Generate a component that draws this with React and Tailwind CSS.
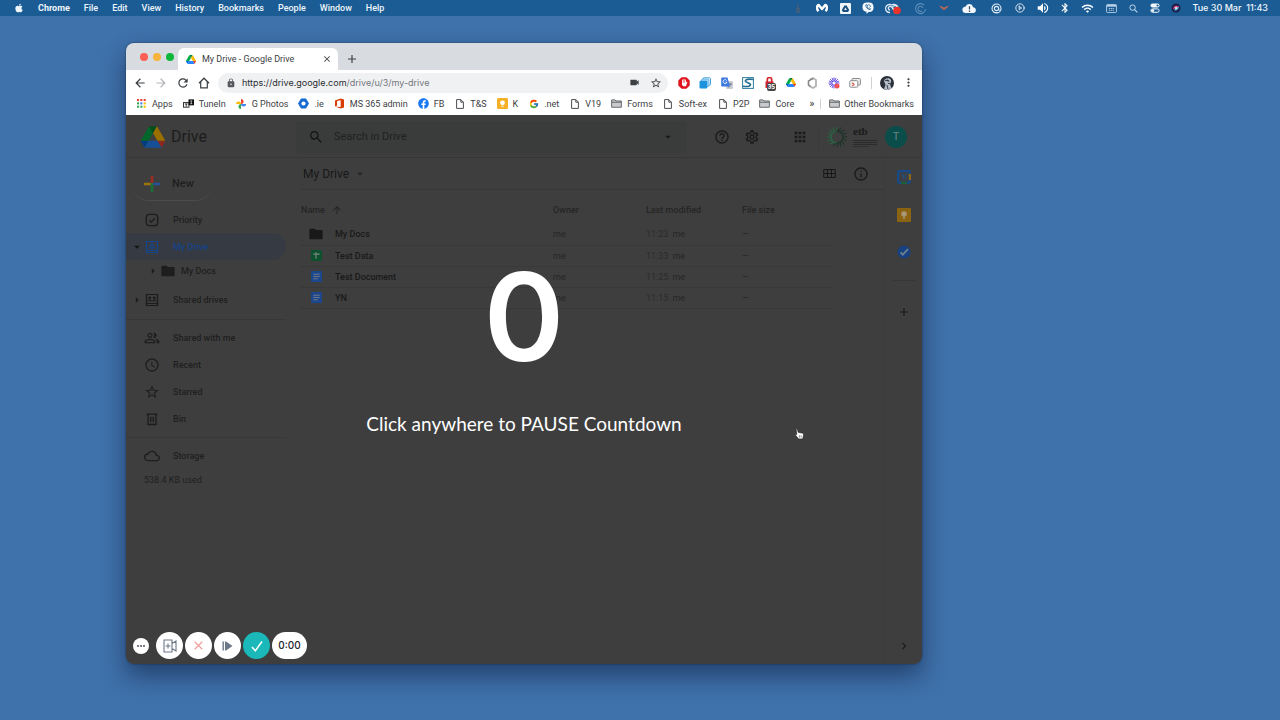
import React from "react";
import {
  MdArrowBack, MdArrowForward, MdRefresh, MdLock, MdVideocam, MdStarBorder, MdMoreVert, MdSearch,
  MdArrowDropDown, MdArrowRight, MdHelpOutline, MdOutlineSettings, MdApps, MdFolder, MdOutlinePeopleAlt,
  MdAccessTime, MdCloudQueue, MdInfoOutline, MdArrowUpward, MdAdd, MdChevronRight, MdClose,
  MdBluetooth, MdWifi, MdVolumeUp,
} from "react-icons/md";
import { FaApple, FaFacebook } from "react-icons/fa";
import { FcGoogle } from "react-icons/fc";
import { LuCirclePlay } from "react-icons/lu";

function DriveLogo({ className }) {
  return (
    <svg viewBox="0 0 87.3 78" className={className} aria-hidden="true">
      <path d="m6.6 66.85 3.85 6.65c.8 1.4 1.95 2.5 3.3 3.3l13.75-23.8h-27.5c0 1.55.4 3.1 1.2 4.5z" fill="#0066da" />
      <path d="m43.65 25-13.75-23.8c-1.35.8-2.5 1.9-3.3 3.3l-25.4 44a9.06 9.06 0 0 0 -1.2 4.5h27.5z" fill="#00ac47" />
      <path d="m73.55 76.8c1.35-.8 2.5-1.9 3.3-3.3l1.6-2.75 7.65-13.25c.8-1.4 1.2-2.95 1.2-4.5h-27.502l5.852 11.5z" fill="#ea4335" />
      <path d="m43.65 25 13.75-23.8c-1.35-.8-2.9-1.2-4.5-1.2h-18.5c-1.6 0-3.15.45-4.5 1.2z" fill="#00832d" />
      <path d="m59.8 53h-32.3l-13.75 23.8c1.35.8 2.9 1.2 4.5 1.2h50.8c1.6 0 3.15-.45 4.5-1.2z" fill="#2684fc" />
      <path d="m73.4 26.5-12.7-22c-.8-1.4-1.95-2.5-3.3-3.3l-13.75 23.8 16.15 28h27.45c0-1.55-.4-3.1-1.2-4.5z" fill="#ffba00" />
    </svg>
  );
}

const statusItems = [
  ["Microphone", "w-3", <svg viewBox="0 0 12 12" className="h-3 w-3"><path d="M6 2v5M4 6.500l2 2 2-2M4 10h4" stroke="#4a5f78" strokeWidth="1.300" fill="none" /></svg>],
  ["Malwarebytes", "w-3.5", <svg viewBox="0 0 14 12" className="h-3 w-3.5"><path d="M3.400 9.300C1.200 6.800 2 3.200 3.800 3L7 7l3.200-4c1.800.2 2.600 3.800.4 6.300" stroke="#fff" strokeWidth="2.400" fill="none" strokeLinejoin="round" /></svg>],
  ["Google Drive", "w-[11px]", <svg viewBox="0 0 11 11" className="h-[11px] w-[11px]"><rect width="11" height="11" rx="1" fill="#eef4fa" /><path d="M4.400 2.500h2.200l2.600 4.400-1.200 2H3L1.800 6.900z" fill="#1d4f7c" /><path d="M5.500 4.600 6.800 7H4.200z" fill="#eef4fa" /></svg>],
  ["Viber", "w-3", <svg viewBox="0 0 12 12" className="h-3 w-3"><path d="M6 .5c4 0 5.500 1.200 5.500 4.700S10 10 6.500 10L4.500 12V9.700C1.600 9.200.5 8 .5 5.200.5 1.700 2 .5 6 .5z" fill="#f5f9fc" /><path d="M3.800 3c0 2.500 1.700 4.300 4.200 4.700l.6-1-1.300-.8-.7.5C5.800 6 5.400 5.500 5.200 4.800l.6-.6L5 2.700zM6.300 2.600c1.400.1 2.200 1 2.200 2.300" fill="none" stroke="#1d5c93" strokeWidth=".8" /></svg>],
  ["Creative Cloud", "w-[17px]", <svg viewBox="0 0 17 13" className="h-[13px] w-[17px]"><path d="M5 10.500a4 4 0 1 1 1.500-7.500A4.500 4.500 0 0 1 13 5M5 8a1.800 1.800 0 1 1 1.500-3l3 3M9 8a2.300 2.300 0 1 1 3-3" stroke="#dce8f4" strokeWidth="1.300" fill="none" /><circle cx="12" cy="8.500" r="3.800" fill="#e8352b" /></svg>],
  ["Sync", "w-[15px]", <svg viewBox="0 0 15 13" className="h-[13px] w-[15px]"><path d="M11 3A5 5 0 1 0 12.500 7M10 6a2.600 2.600 0 1 0-1 3" stroke="#5c8cb8" strokeWidth="1.100" fill="none" /></svg>],
  ["Fox", "w-2.5", <svg viewBox="0 0 12 8" className="h-2 w-3"><path d="M.500 1 5 3l1 .600L7 3l4.500-2C10.500 4 8 5 7 5.500L6 7 5 5.500C4 5 1.500 4 .500 1z" fill="#c1694f" /></svg>],
  ["Cloud alert", "w-[18px]", <svg viewBox="0 0 16 12" className="h-[11px] w-[15px]"><path d="M4 11a3.500 3.500 0 0 1-.500-7A4.500 4.500 0 0 1 12 4.500 3.300 3.300 0 0 1 12.500 11z" fill="#f3f7fb" /><path d="M8 3.500v3.600M8 8.200v1.500" stroke="#3d4f63" strokeWidth="1.400" /></svg>],
  ["Assistant", "w-[15px]", <svg viewBox="0 0 12 12" className="h-[11px] w-[11px]"><circle cx="6" cy="6" r="4.900" stroke="#e4eef7" fill="none" strokeWidth="1.200" /><circle cx="6" cy="6" r="2.300" stroke="#e4eef7" fill="none" strokeWidth="1.200" /><path d="M8.300 5.500c.2 3 1.500 3.500 2.500 2M3 10.500h6" stroke="#e4eef7" fill="none" /></svg>],
  ["Play", "w-2.5", <LuCirclePlay className="h-2.5 w-2.5 text-white" />],
  ["Volume", "w-3.5", <MdVolumeUp className="h-3.5 w-3.5 text-white" />],
  ["Bluetooth", "w-2", <MdBluetooth className="h-3 w-3 shrink-0 text-white" />],
  ["Wi-Fi", "w-3.5", <MdWifi className="h-[13px] w-[13px] text-white" />],
  ["Calendar", "w-3", <svg viewBox="0 0 12 10" className="h-[9px] w-[11px]"><rect x=".5" y=".5" width="11" height="9" rx="1" fill="none" stroke="#b9d2e8" /><path d="M1 2h10" stroke="#b9d2e8" strokeWidth="2" /><path d="M3 5h6M3 7h6" stroke="#b9d2e8" strokeDasharray="1.500 .6" /></svg>],
  ["Spotlight", "w-[11px]", <svg viewBox="0 0 10 10" className="h-[9px] w-[9px]"><circle cx="4" cy="4" r="3" fill="none" stroke="#c3d9ec" strokeWidth="1.100" /><path d="m6.200 6.200 3 3" stroke="#c3d9ec" strokeWidth="1.200" /></svg>],
  ["Control Centre", "w-2.5", <svg viewBox="0 0 10 10" className="h-2.5 w-2.5"><rect x=".5" y=".5" width="9" height="4" rx="2" fill="#f4f8fc" /><circle cx="7.500" cy="2.500" r="1.100" fill="#1d5c93" /><rect x=".9" y="5.900" width="8.200" height="3.400" rx="1.700" fill="none" stroke="#f4f8fc" /><circle cx="2.800" cy="7.600" r="1.400" fill="#f4f8fc" /></svg>],
  ["Siri", "w-2.5", <svg viewBox="0 0 10 10" className="h-2.5 w-2.5"><circle cx="5" cy="5" r="4.500" fill="#20204a" /><path d="M2 6C3 2 6 2 8 4 6 5 4 5 2 6z" fill="#f04c8c" /><path d="M3 7c2 1 4 0 5-3-2 0-4 2-5 3z" fill="#55c8ee" /><circle cx="5" cy="5" r="1" fill="#fff" /></svg>],
];

function MenuBar() {
  return (
    <header className="flex h-4 shrink-0 items-center bg-[#1b5c95] pl-3.5 pr-3 text-[9px] leading-4 font-medium text-[#eef5fb]">
      <nav aria-label="Application menu" className="flex items-center gap-3.5 font-[Roboto,sans-serif]">
        <button aria-label="Apple menu"><FaApple className="h-2.5 w-2.5" /></button>
        <button className="font-bold">Chrome</button>
        {["File", "Edit", "View", "History", "Bookmarks", "People", "Window", "Help"].map((t) => <button key={t}>{t}</button>)}
      </nav>
      <div className="ml-auto flex items-center gap-[11px]">
        {statusItems.map(([name, w, icon]) => (
          <button key={name} aria-label={name} className={"flex h-4 shrink-0 items-center justify-center " + w}>{icon}</button>
        ))}
        <button className="whitespace-pre">{"Tue 30 Mar  11:43"}</button>
      </div>
    </header>
  );
}

function PageIcon() {
  return <svg viewBox="0 0 8 10" className="h-2.5 w-2"><path d="M.6.6h4.200l2.600 2.600v6.200H.6zM4.800.6v2.600h2.600" fill="none" stroke="#4a4d51" strokeWidth="1" /></svg>;
}
function FolderIcon() {
  return <svg viewBox="0 0 12 10" className="h-[9px] w-[11px]"><path d="M.6 9.200V1h3.800l1 1.200h6v7z" fill="#c9cbcd" stroke="#5b5e62" /><path d="M.6 3.600h10.800" stroke="#5b5e62" /></svg>;
}

const dots = ["#ea4335", "#ea4335", "#ea4335", "#34a853", "#4285f4", "#fbbc04", "#34a853", "#34a853", "#fbbc04"];
const bookmarks = [
  ["Apps", <svg viewBox="0 0 10 10" className="h-[9px] w-[9px]">{dots.map((c, i) => <rect key={i} x={(i % 3) * 3.7} y={Math.floor(i / 3) * 3.7} width="2.300" height="2.300" fill={c} />)}</svg>],
  ["TuneIn", <svg viewBox="0 0 12 9" className="h-[9px] w-[11px]"><rect x=".5" y="3.500" width="6" height="5" fill="#fff" stroke="#222" /><path d="M2 5h3M3.500 5v3" stroke="#222" /><rect x="6" y="0" width="6" height="6.500" fill="#111" /><path d="M8 1.700h2M9 1.700v3M8 4.700h2" stroke="#fff" strokeWidth=".7" /></svg>],
  ["G Photos", <svg viewBox="0 0 12 12" className="h-2.5 w-2.5"><path d="M6 6V0a3 3 0 0 1 0 6z" fill="#ea4335" /><path d="M6 6h6a3 3 0 0 1-6 0z" fill="#4285f4" /><path d="M6 6v6a3 3 0 0 1 0-6z" fill="#34a853" /><path d="M6 6H0a3 3 0 0 1 6 0z" fill="#fbbc04" /></svg>],
  [".ie", <svg viewBox="0 0 12 12" className="h-[11px] w-[11px]"><path d="M3.500 1h5L11.500 6l-3 5h-5L.5 6z" fill="#1769d2" stroke="#1769d2" strokeLinejoin="round" /><circle cx="6" cy="6" r="2.300" fill="#fff" /></svg>],
  ["MS 365 admin", <svg viewBox="0 0 10 12" className="h-[11px] w-[9px]"><path d="M0 2.800 6.300.4 10 1.500v9L6.300 11.600 0 9.300l6.300.7V2.300L2.300 3.300v5L0 9.300z" fill="#d83b01" /></svg>],
  ["FB", <FaFacebook className="h-[11px] w-[11px] text-[#1877f2]" />],
  ["T&S", <PageIcon />],
  ["K", <svg viewBox="0 0 12 12" className="h-[11px] w-[11px]"><rect width="12" height="12" rx="1.500" fill="#f6b026" /><circle cx="6" cy="5.200" r="2.600" fill="#fff" /><path d="M4.800 9h2.400" stroke="#fff" strokeWidth="1.300" /></svg>],
  [".net", <FcGoogle className="h-2.5 w-2.5" />],
  ["V19", <PageIcon />],
  ["Forms", <FolderIcon />],
  ["Soft-ex", <PageIcon />],
  ["P2P", <PageIcon />],
  ["Core", <FolderIcon />],
];

const extensions = [
  ["AdBlock", <svg viewBox="0 0 12 12" className="h-3 w-3"><path d="M3.600.3h4.800l3.300 3.300v4.800l-3.300 3.300H3.600L.3 8.400V3.600z" fill="#e0121c" /><path d="M4.600 7V3M6 7V2.300M7.400 7V3" stroke="#fff" strokeWidth="1" strokeLinecap="round" /><path d="M4.100 5.800h3.800l.9-1.200.6.500L8 9.300H5.200L4.100 8z" fill="#fff" /></svg>],
  ["Tab copy", <svg viewBox="0 0 12 12" className="h-3 w-3"><rect x="4" y=".8" width="7.500" height="7.500" rx="1" fill="#fff" stroke="#43a0dc" /><rect x="2.500" y="2" width="7.500" height="7.500" rx="1" fill="#a9d8f5" stroke="#43a0dc" strokeWidth=".7" /><rect x=".5" y="3.700" width="7.800" height="7.800" rx="1" fill="#1e93dd" /></svg>],
  ["Translate", <svg viewBox="0 0 12 12" className="h-3 w-3"><rect x="5" y="4" width="7" height="8" rx="1" fill="#c9ccd2" /><path d="M7 7h4M9 6v1M7.500 10.500 10 7" stroke="#5f6f8c" strokeWidth=".8" /><path d="M1 .5h5.500l2.500 9H1a.8.8 0 0 1-.8-.8V1.300A.8.800 0 0 1 1 .5z" fill="#3c78e0" /><path d="M5.800 3.600a2 2 0 1 0 .2 1.600H4.300" stroke="#fff" strokeWidth=".8" fill="none" /></svg>],
  ["Scribe", <svg viewBox="0 0 12 12" className="h-3 w-3"><rect x=".6" y=".6" width="10.800" height="10.800" fill="#fff" stroke="#2c7d9d" strokeWidth="1" /><path d="M11 2.600C7 1.500 2.800 2.600 3.400 4.200s5.400 1.800 5 3.600S4 9.600 1 9.200" stroke="#226e91" strokeWidth="1.600" fill="none" /></svg>],
  ["Tasks", <svg viewBox="0 0 12 12" className="h-3 w-3"><path d="M1.500 4.500h8V11h-8z" fill="#d3222c" /><path d="M3.300 5V2.700a2.200 2.200 0 0 1 4.400 0V5" fill="none" stroke="#d3222c" strokeWidth="1.700" /></svg>],
  ["Drive", <DriveLogo className="h-[9px] w-2.5" />],
  ["Office", <svg viewBox="0 0 12 12" className="h-3 w-3"><path d="M4 2.500 7 1l3 2v6l-3 2-3-1.500" fill="none" stroke="#b2b2b2" strokeWidth="1.800" strokeLinejoin="round" /><path d="M4.500 9.500 2.500 8V4L5 2.500l2-.8" fill="none" stroke="#8a8a8a" strokeWidth="1.600" strokeLinejoin="round" /></svg>],
  ["Loom", <svg viewBox="0 0 12 12" className="h-3 w-3"><path d="M6 .5v11M.5 6h11M2.100 2.100l7.800 7.800M9.900 2.100 2.100 9.900M4 .9l4 10.200M8 .9 4 11.100M.9 4l10.200 4M.9 8l10.200-4" stroke="#6c50e6" strokeWidth="1" /><circle cx="6" cy="6" r="1.600" fill="#fff" /><circle cx="9" cy="9" r="2.500" fill="#f0545a" /></svg>],
  ["Cast", <svg viewBox="0 0 12 12" className="h-3 w-3"><rect x="3" y="1.500" width="8.400" height="6.500" rx="1" fill="#eee" stroke="#898989" /><rect x=".8" y="3.700" width="8" height="6.500" rx="1" fill="#fff" stroke="#898989" /><path d="M2.800 8.200h2M2.800 6.200a2 2 0 0 1 2.400 2" stroke="#d2493c" strokeWidth="1.100" fill="none" /></svg>],
];

function BrowserChrome() {
  return (
    <div className="shrink-0 text-[#3c4043]">
      <div className="flex h-[27px] items-end bg-[#d8dce0] pl-3.5">
        <div className="flex h-[27px] w-[38px] shrink-0 items-center gap-[5px]">
          <button aria-label="Close window" className="h-2 w-2 rounded-full bg-[#f95f57]" />
          <button aria-label="Minimise window" className="h-2 w-2 rounded-full bg-[#f8b33c]" />
          <button aria-label="Zoom window" className="h-2 w-2 rounded-full bg-[#0fb73b]" />
        </div>
        <div className="flex h-[22px] w-40 items-center rounded-t-md bg-white pl-2 pr-1.5">
          <DriveLogo className="h-[9px] w-2.5" />
          <span className="ml-1.5 font-[Roboto,sans-serif] text-[9px] leading-3">My Drive - Google Drive</span>
          <button aria-label="Close tab" className="ml-auto"><MdClose className="h-2.5 w-2.5" /></button>
        </div>
        <button aria-label="New tab" className="ml-[7px] flex h-[22px] items-center"><MdAdd className="h-3.5 w-3.5" /></button>
      </div>
      <div className="flex h-[25px] items-center bg-white pl-1.5 pr-[7px]">
        <div className="flex w-20 shrink-0 items-center justify-between">
          <button aria-label="Back"><MdArrowBack className="h-3.5 w-4" /></button>
          <button aria-label="Forward"><MdArrowForward className="h-3.5 w-4 text-[#b4b6b9]" /></button>
          <button aria-label="Reload"><MdRefresh className="h-3.5 w-4" /></button>
          <button aria-label="Home" className="flex w-4 justify-center"><svg viewBox="0 0 12 12" className="h-3 w-3" fill="none" stroke="currentColor" strokeWidth="1.200"><path d="M.9 6.200 6 1.200l5.100 5M2.700 5v5.800h6.600V5" /></svg></button>
        </div>
        <div className="ml-1.5 flex h-5 min-w-0 flex-1 items-center rounded-full bg-[#f0f1f3] pl-2 pr-1.5">
          <MdLock className="h-2.5 w-2.5 text-[#55585c]" />
          <a href="#drive" className="ml-1.5 text-[9px] leading-3 text-[#74777c]">
            <span className="text-[#2a2c30]">https://drive.google.com</span>/drive/u/3/my-drive
          </a>
          <button aria-label="Camera access" className="ml-auto"><MdVideocam className="h-[11px] w-[11px]" /></button>
          <button aria-label="Bookmark this page" className="ml-2.5"><MdStarBorder className="h-3 w-3" /></button>
        </div>
        <div className="ml-2.5 flex w-[183px] shrink-0 items-center justify-between">
          {extensions.map(([name, icon]) => (
            <button key={name} aria-label={name} className="relative flex h-3 w-3 items-center justify-center">
              {icon}
              {name === "Tasks" && <span className="absolute left-[3px] top-1.5 rounded-xs bg-[#444648] px-px text-[6px] leading-2 font-bold text-white">35</span>}
            </button>
          ))}
        </div>
        <span className="ml-2.5 h-3 w-px shrink-0 bg-[#cfd1d4]" />
        <button aria-label="Profile" className="ml-2 shrink-0">
          <svg viewBox="0 0 14 14" className="h-3.5 w-3.5"><circle cx="7" cy="7" r="7" fill="#2a303a" /><path d="M4 5c0-3 6-4 7-1 .6 2-.5 3-1 4l1.500 4.500A7 7 0 0 1 4 13l1.500-4z" fill="#b5bcc6" /><path d="M5 4.500 8 4l1 1.500M8 7.500h2M7 9l1 4" stroke="#394250" /></svg>
        </button>
        <button aria-label="Chrome menu" className="ml-2 shrink-0"><MdMoreVert className="h-[13px] w-[13px]" /></button>
      </div>
      <nav aria-label="Bookmarks" className="flex h-5 items-center bg-white pb-[3px] pl-2.5 pr-2 font-[Roboto,sans-serif] text-[9px] leading-3">
        <div className="flex min-w-0 items-center gap-2.5">
          {bookmarks.map(([name, icon]) => (
            <a key={name} href="#bookmark" className="flex items-center gap-[5px] whitespace-nowrap">
              <span className="flex w-[11px] shrink-0 justify-center">{icon}</span>{name}
            </a>
          ))}
        </div>
        <button aria-label="More bookmarks" className="ml-auto text-[11px]">»</button>
        <span className="ml-1.5 mr-2 h-2.5 w-px bg-[#cfd1d4]" />
        <a href="#other" className="flex items-center gap-1 whitespace-nowrap"><FolderIcon />Other Bookmarks</a>
      </nav>
    </div>
  );
}

function DriveHeader() {
  return (
    <header className="flex h-[43px] shrink-0 items-center border-b border-[#343838] px-[15px] pt-0.5">
      <DriveLogo className="h-[22px] w-6 brightness-60" />
      <span className="ml-1.5 w-[125px] shrink-0 text-[16px] leading-6 text-[#1c1c1c]">Drive</span>
      <form className="flex h-8 min-w-0 flex-1 items-center rounded bg-[#3a3c3c] pl-3 pr-3" onSubmit={(e) => e.preventDefault()}>
        <MdSearch className="h-4 w-4 text-[#141414]" />
        <input aria-label="Search in Drive" placeholder="Search in Drive" className="ml-2.5 min-w-0 flex-1 bg-transparent font-[Roboto,sans-serif] text-[11px] placeholder:text-[#202020] placeholder:opacity-100" />
        <button type="button" aria-label="Search options"><MdArrowDropDown className="h-3.5 w-3.5" /></button>
      </form>
      <div className="ml-[27px] flex shrink-0 items-center">
        <button aria-label="Support"><MdHelpOutline className="h-4 w-4" /></button>
        <button aria-label="Settings" className="ml-3.5"><MdOutlineSettings className="h-4 w-4" /></button>
        <button aria-label="Google apps" className="ml-8"><MdApps className="h-4 w-4" /></button>
        <span className="ml-2.5 h-6 w-px bg-[#3a3a3a]" />
        <svg viewBox="0 0 24 24" className="ml-1.5 h-6 w-6" aria-hidden="true">
          {Array.from({ length: 16 }, (_, i) => (
            <path key={i} d="M10 6.500Q14 6.500 16 2.500" transform={`rotate(${i * 22.5} 12 12)`} stroke={i > 8 ? "#2c5f44" : "#22352c"} strokeWidth="1.300" fill="none" />
          ))}
        </svg>
        <div className="ml-1 flex w-6 flex-col gap-px">
          <span className="font-['Liberation_Serif',serif] text-[11px] leading-2 font-bold">etb</span>
          <span className="mt-1 h-px bg-[#2b2b2b]" />
          <span className="h-px bg-[#2b2b2b]" />
          <span className="h-px bg-[#2b2b2b]" />
          <span className="h-px w-4 bg-[#303030]" />
        </div>
        <button aria-label="Account" className="ml-2 h-[22px] w-[22px] rounded-full bg-[#0a4d4b] text-[11px] leading-5 text-[#668583]">T</button>
      </div>
    </header>
  );
}

function SideItem({ icon, label, arrow, className = "h-[27px]" }) {
  return (
    <a href="#section" className={"flex shrink-0 items-center pl-1 " + className}>
      <span className="w-3.5">{arrow}</span>
      <span className="flex w-4 justify-center">{icon}</span>
      <span className="ml-[13px]">{label}</span>
    </a>
  );
}

const rightTri = <MdArrowRight className="h-3.5 w-3.5" />;

function Sidebar() {
  return (
    <nav aria-label="Drive" className="flex w-[160px] shrink-0 flex-col text-[9px] leading-3 font-medium text-[#1e1e1e]">
      <button className="ml-1.5 mt-2.5 flex h-[33px] w-20 items-center rounded-full border-b border-[#4c4c4c] pl-2.5 text-[11px]">
        <svg viewBox="0 0 20 20" className="h-5 w-5" aria-hidden="true">
          <path d="M8.700 2h2.600v7H8.700z" fill="#9d2d24" /><path d="M8.700 9h2.600v9H8.700z" fill="#187038" /><path d="M2 8.700h6.700v2.600H2z" fill="#9c7510" /><path d="M11.300 8.700H18v2.600h-6.700z" fill="#25549c" />
        </svg>
        <span className="ml-2.5">New</span>
      </button>
      <SideItem className="mt-[5px] h-[27px]" label="Priority" icon={<svg viewBox="0 0 14 14" className="h-3.5 w-3.5" fill="none" stroke="#1c1c1c" strokeWidth="1.300"><rect x="1.300" y="1.300" width="11.400" height="11.400" rx="3" /><path d="m4.300 7.200 2 1.900 3.700-4" /></svg>} />
      <SideItem className="h-[27px] rounded-r-full bg-[#363b43] text-[#15428a]" label="My Drive" arrow={<MdArrowDropDown className="h-3.5 w-3.5 text-[#151515]" />}
        icon={<svg viewBox="0 0 14 14" className="h-3.5 w-3.5" fill="none" stroke="#154690" strokeWidth="1.200"><path d="M1.500 1.500h11v11h-11zM1.500 10.500h11" /><path d="m7 3.700 2.400 4.300H4.600z" /></svg>} />
      <a href="#docs" className="flex h-[22px] shrink-0 items-center pl-5">{rightTri}<MdFolder className="h-4 w-4" /><span className="ml-[5px]">My Docs</span></a>
      <SideItem className="mt-0.5 h-8" label="Shared drives" arrow={rightTri}
        icon={<svg viewBox="0 0 14 14" className="h-3.5 w-3.5" fill="none" stroke="#1c1c1c" strokeWidth="1.200"><path d="M1.500 1.500h11v11h-11zM1.500 10.500h11" /><circle cx="4.800" cy="5" r=".8" /><circle cx="9.200" cy="5" r=".8" /><path d="M3 8.200c0-1.200 3.600-1.200 3.600 0M7.400 8.200c0-1.200 3.600-1.200 3.600 0" /></svg>} />
      <hr className="mb-1 mt-[3px] border-[#373737]" />
      <SideItem label="Shared with me" icon={<MdOutlinePeopleAlt className="h-4 w-4" />} />
      <SideItem label="Recent" icon={<MdAccessTime className="h-4 w-4" />} />
      <SideItem label="Starred" icon={<MdStarBorder className="h-4 w-4" />} />
      <SideItem label="Bin" icon={<svg viewBox="0 0 14 14" className="h-3.5 w-3.5" fill="none" stroke="#1c1c1c" strokeWidth="1.300"><path d="M1.500 2.200h11M3 2.200v10.300h8V2.200M5.700 4.700v5.500M8.300 4.700v5.500" /></svg>} />
      <hr className="mb-1 mt-[5px] border-[#373737]" />
      <SideItem label="Storage" icon={<MdCloudQueue className="h-4 w-4" />} />
      <span className="ml-[18px] mt-[5px] font-normal">538.4 KB used</span>
    </nav>
  );
}

const DocIcon = () => <svg viewBox="0 0 12 12" className="h-[11px] w-[11px]"><rect width="12" height="12" rx="1" fill="#1d478c" /><path d="M2.500 3.500h7M2.500 6h7M2.500 8.500h5" stroke="#6c7787" strokeWidth="1.100" /></svg>;
const files = [
  ["My Docs", "11:23", <MdFolder className="h-4 w-4" />],
  ["Test Data", "11:33", <svg viewBox="0 0 12 12" className="h-[11px] w-[11px]"><rect width="12" height="12" rx="1" fill="#0d512f" /><path d="M2.500 4.500h7M5.500 2.500v7" stroke="#76877e" strokeWidth="1.300" /></svg>],
  ["Test Document", "11:25", <DocIcon />],
  ["YN", "11:15", <DocIcon />],
];

function FileList() {
  return (
    <main className="min-w-0 flex-1 border-r border-[#3b3b3b] pl-[15px]">
      <div className="flex h-8 items-center border-b border-[#373737] pl-0.5 pr-[15px]">
        <button className="flex items-center text-[12px] leading-5 text-[#181818]">My Drive<MdArrowDropDown className="ml-1 h-3.5 w-3.5 text-[#252525]" /></button>
        <button aria-label="Grid view" className="ml-auto">
          <svg viewBox="0 0 14 10" className="h-[9px] w-[13px]" fill="none" stroke="#171717" strokeWidth="1.100"><path d="M.6.600h12.800v8.800H.6zM.6 5h12.800M4.800.6v8.800M9.200.6v8.800" /></svg>
        </button>
        <button aria-label="View details" className="ml-[17px]"><MdInfoOutline className="h-4 w-4" /></button>
      </div>
      <div className="pr-[51px]">
        <table className="w-full table-fixed text-left text-[9px] leading-3 text-[#252525]">
          <thead>
            <tr className="h-[34px]">
              <th className="p-0 pt-1.5 font-medium"><span className="flex items-center gap-1.5">Name<MdArrowUpward className="h-3 w-3" /></span></th>
              <th className="w-[93px] p-0 pt-1.5 font-medium">Owner</th>
              <th className="w-24 p-0 pt-1.5 font-medium">Last modified</th>
              <th className="w-[91px] p-0 pt-1.5 font-medium">File size</th>
            </tr>
          </thead>
          <tbody>
            {files.map(([name, time, icon]) => (
              <tr key={name} className="h-[21px] border-b border-[#383838]">
                <td className="p-0 font-medium text-[#191919]"><span className="flex items-center"><span className="ml-[7px] mr-[11px] flex w-4 justify-center">{icon}</span>{name}</span></td>
                <td className="p-0">me</td>
                <td className="p-0"><span className="mr-1 text-[#2b2b2b]">{time}</span>me</td>
                <td className="p-0">—</td>
              </tr>
            ))}
          </tbody>
        </table>
      </div>
    </main>
  );
}

function SidePanel() {
  return (
    <aside aria-label="Side panel" className="flex w-[37px] shrink-0 flex-col items-center pb-[11px] pt-3">
      <button aria-label="Calendar"><svg viewBox="0 0 14 14" className="h-3.5 w-3.5"><rect x="1.200" y="1.200" width="11.600" height="11.600" rx="1" fill="#3c4044" stroke="#174a8a" strokeWidth="2.200" /><path d="M11.800 4H14v6h-2.200z" fill="#8a6a18" /><path d="M4 11.800h6V14H4z" fill="#1c5f3a" /><path d="M4.500 5h2v4M8.500 5v4" stroke="#214f86" fill="none" /></svg></button>
      <button aria-label="Keep" className="mt-6"><svg viewBox="0 0 14 14" className="h-3.5 w-3.5"><rect width="14" height="14" rx="1" fill="#8a6410" /><circle cx="7" cy="6" r="2.800" fill="#a89672" /><path d="M5.800 10h2.400" stroke="#a89672" strokeWidth="1.300" /></svg></button>
      <button aria-label="Tasks" className="mt-[23px]"><svg viewBox="0 0 14 14" className="h-3.5 w-3.5"><circle cx="7" cy="7" r="6.500" fill="#17427f" /><path d="m3.500 7.300 2.300 2.300L11 4" stroke="#72808f" strokeWidth="1.800" fill="none" /></svg></button>
      <hr className="mt-[21px] w-6 border-[#373737]" />
      <button aria-label="Get add-ons" className="mt-6"><MdAdd className="h-3.5 w-3.5" /></button>
      <button aria-label="Hide side panel" className="mt-auto"><MdChevronRight className="h-3.5 w-3.5" /></button>
    </aside>
  );
}

function RecorderControls() {
  const round = "flex h-[27px] w-[27px] items-center justify-center rounded-full";
  return (
    <div className="absolute bottom-[5px] left-[7px] flex items-center gap-0.5">
      <button aria-label="More" className="mr-[5px] flex h-4 w-4 items-center justify-center rounded-full bg-white">
        <svg viewBox="0 0 8 2" className="h-0.5 w-2" fill="#3a3f4a"><circle cx="1" cy="1" r=".9" /><circle cx="4" cy="1" r=".9" /><circle cx="7" cy="1" r=".9" /></svg>
      </button>
      <button aria-label="Add camera" className={round + " bg-white"}>
        <svg viewBox="0 0 14 14" className="h-3.5 w-3.5" fill="none" stroke="#6d7888" strokeWidth="1.100"><path d="M9 4.500V1H1v12h8V9.500l4 2.500V2zM9 4.500v5M5 4.500v5M2.500 7h5" /></svg>
      </button>
      <button aria-label="Cancel recording" className={round + " bg-white"}>
        <svg viewBox="0 0 10 10" className="h-[9px] w-[9px]"><path d="m.8.8 8.400 8.400M9.200.8.800 9.200" stroke="#ef9d9d" strokeWidth="1.300" /></svg>
      </button>
      <button aria-label="Start now" className={round + " bg-white"}>
        <svg viewBox="0 0 11 10" className="h-2.5 w-[11px]" fill="#6d7888"><path d="M.5.500h1.400v9H.5zM3 .5h1v9H3zM4 .5 10.500 5 4 9.500z" /></svg>
      </button>
      <button aria-label="Finish" className={round + " bg-[#1ab8b8]"}>
        <svg viewBox="0 0 12 12" className="h-3 w-3"><path d="m1 7 3.300 3.700L11 1.500" stroke="#fff" strokeWidth="1.500" fill="none" /></svg>
      </button>
      <time className="flex h-[27px] w-[35px] items-center justify-center rounded-full bg-white text-[10px] font-medium text-[#23262e]">0:00</time>
    </div>
  );
}

export default function App() {
  return (
    <div className="flex min-h-screen flex-col bg-[#3f71aa] font-[Inter,'Liberation_Sans',sans-serif]">
      <MenuBar />
      <div className="flex flex-1 flex-col pb-14 pl-[126px] pr-[358px] pt-[27px]">
        <section aria-label="Google Chrome" className="flex flex-1 flex-col overflow-hidden rounded-lg shadow-[0_12px_24px_rgba(0,10,40,0.45),0_0_2px_rgba(0,0,0,0.5)]">
          <BrowserChrome />
          <div className="relative flex flex-1 flex-col bg-[#3e3e3e] font-[Roboto,sans-serif] text-[#1a1a1a]">
            <DriveHeader />
            <div className="flex flex-1">
              <Sidebar />
              <FileList />
              <SidePanel />
            </div>
            <button className="absolute inset-0 flex flex-col items-center pt-[139px] font-[Inter,sans-serif] text-white">
              <span className="text-[122px] leading-[126px] font-semibold">0</span>
              <span className="mt-8 font-[Lato,sans-serif] text-[19px] leading-6">Click anywhere to PAUSE Countdown</span>
            </button>
            <div className="font-[Inter,sans-serif]"><RecorderControls /></div>
            <svg viewBox="0 0 12 14" className="absolute left-[668px] top-[313px] h-3 w-2.5" aria-hidden="true">
              <path d="M2.500 1c.8-.5 1.500 0 1.700.8L5 5l5.500 1c1 .3 1 1.500.8 3l-.8 4h-5L2 8.500c-.5-1 .6-1.600 1.300-.9z" fill="#fff" stroke="#222" strokeWidth=".8" /><path d="M6.500 8.500v3M8.500 8.500v3" stroke="#555" strokeWidth=".8" />
            </svg>
          </div>
        </section>
      </div>
    </div>
  );
}
